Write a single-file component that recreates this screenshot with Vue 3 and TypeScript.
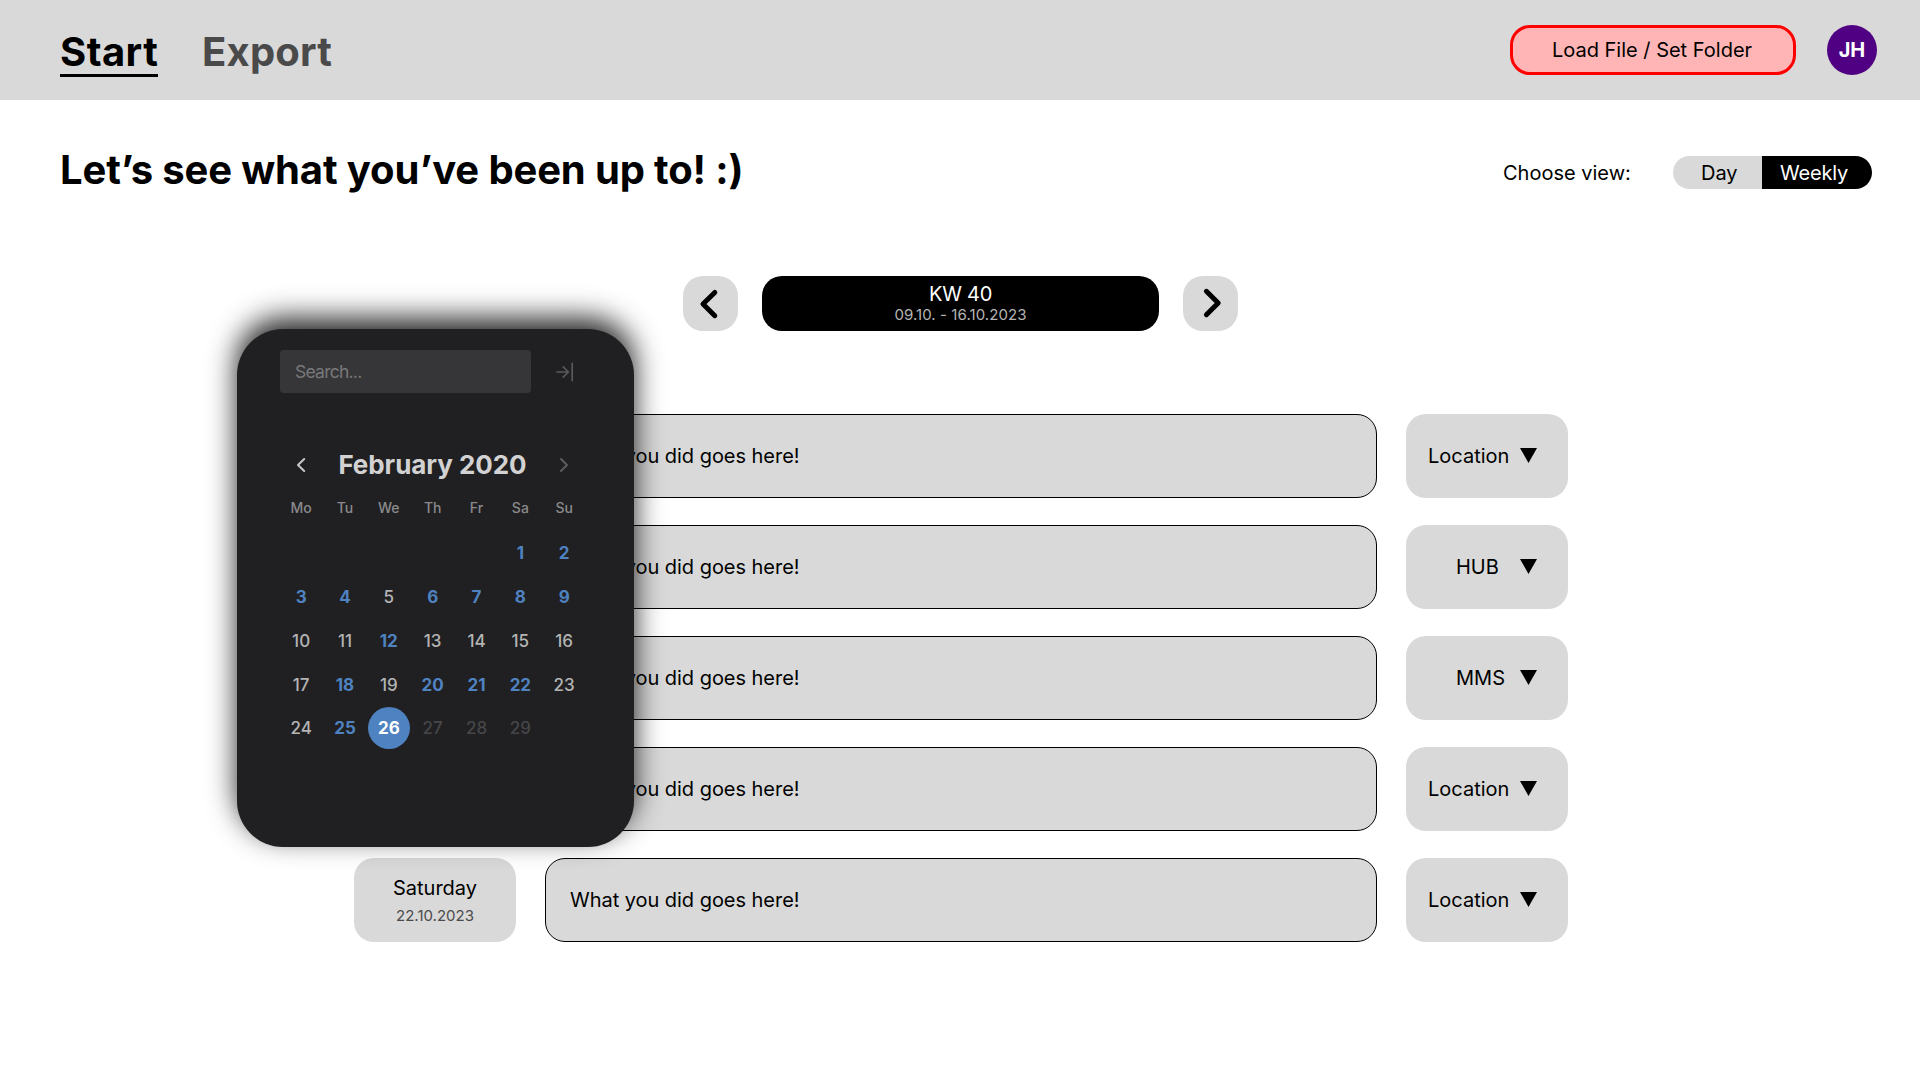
<script setup lang="ts">
interface Entry {
  day?: string
  date?: string
  text: string
  place: string
}

interface CalendarDay {
  label: string
  kind: 'blank' | 'plain' | 'noted' | 'today' | 'future'
}

const prompt = 'What you did goes here!'

const entries: Entry[] = [
  { text: prompt, place: 'Location' },
  { text: prompt, place: 'HUB' },
  { text: prompt, place: 'MMS' },
  { text: prompt, place: 'Location' },
  { day: 'Saturday', date: '22.10.2023', text: prompt, place: 'Location' },
]

const weekdays = ['Mo', 'Tu', 'We', 'Th', 'Fr', 'Sa', 'Su']

const noted = [1, 2, 3, 4, 6, 7, 8, 9, 12, 18, 20, 21, 22, 25]
const today = 26
const leadingBlanks = 5

const days: CalendarDay[] = Array.from({ length: 35 }, (_, i) => {
  const n = i - leadingBlanks + 1
  if (n < 1 || n > 29) return { label: '', kind: 'blank' }
  if (n === today) return { label: String(n), kind: 'today' }
  if (n > today) return { label: String(n), kind: 'future' }
  return { label: String(n), kind: noted.includes(n) ? 'noted' : 'plain' }
})
</script>

<template>
  <div class="page">
    <header class="topbar">
      <nav class="tabs">
        <a class="tab active">Start</a>
        <a class="tab">Export</a>
      </nav>
      <div class="account">
        <button class="load">Load File / Set Folder</button>
        <div class="avatar">JH</div>
      </div>
    </header>

    <section class="intro">
      <h1>Let’s see what you’ve been up to! :)</h1>
      <div class="view">
        <span class="view-label">Choose view:</span>
        <div class="toggle">
          <span class="option day-option">Day</span>
          <span class="option week-option">Weekly</span>
        </div>
      </div>
    </section>

    <section class="week">
      <button class="step">
        <svg width="55" height="55" viewBox="0 0 55 55"><path d="M31.8 16.5 L20 28 L31.8 39.7" /></svg>
      </button>
      <div class="range">
        <span class="kw">KW 40</span>
        <span class="dates">09.10. - 16.10.2023</span>
      </div>
      <button class="step">
        <svg width="55" height="55" viewBox="0 0 55 55"><path d="M23.4 15.3 L35.2 27 L23.4 38.7" /></svg>
      </button>
    </section>

    <main class="entries">
      <div v-for="(entry, i) in entries" :key="i" class="entry">
        <div class="day-card">
          <span v-if="entry.day" class="day-name">{{ entry.day }}</span>
          <span v-if="entry.date" class="day-date">{{ entry.date }}</span>
        </div>
        <div class="field">{{ entry.text }}</div>
        <div class="place">
          <span class="place-name" :class="{ short: entry.place.length < 4 }">{{ entry.place }}</span>
          <svg class="caret" width="17" height="15" viewBox="0 0 17 15"><path d="M0 0 H17 L8.5 15 Z" /></svg>
        </div>
      </div>
    </main>

    <aside class="calendar">
      <div class="search-row">
        <div class="search">Search...</div>
        <svg class="collapse" width="18" height="20" viewBox="0 0 18 20">
          <path d="M0.9 10 H12 M7.2 4.8 L12.4 10 L7.2 15.2 M16.2 1.4 V18.6" />
        </svg>
      </div>
      <div class="month">
        <svg width="10" height="16" viewBox="0 0 10 16"><path class="prev" d="M8.2 2 L2 8 L8.2 14" /></svg>
        <span class="month-name">February 2020</span>
        <svg width="10" height="16" viewBox="0 0 10 16"><path class="next" d="M2 2 L8 8 L2 14" /></svg>
      </div>
      <div class="weekdays">
        <span v-for="w in weekdays" :key="w">{{ w }}</span>
      </div>
      <div class="days">
        <div v-for="(d, i) in days" :key="i" class="cell" :class="d.kind">
          <span v-if="d.label">{{ d.label }}</span>
        </div>
      </div>
    </aside>
  </div>
</template>

<style>
body {
  margin: 0;
  background: #fff;
}
</style>

<style scoped>
.page {
  position: relative;
  width: 1920px;
  height: 1080px;
  overflow: hidden;
  background: #fff;
  color: #000;
  font-family: Inter, 'Liberation Sans', sans-serif;
  font-size: 20px;
  line-height: 24px;
}
.page * {
  box-sizing: border-box;
}
button {
  padding: 0;
  border: 0;
  font: inherit;
  color: inherit;
}
.topbar {
  display: flex;
  justify-content: space-between;
  height: 100px;
  padding: 25px 43px 0 60px;
  background: #d9d9d9;
}
.tabs {
  display: flex;
  align-items: flex-start;
  gap: 44px;
}
.tab {
  height: 52px;
  padding-top: 3px;
  font-size: 40px;
  line-height: 48px;
  font-weight: 700;
  letter-spacing: 0.2px;
  color: #4a4a4a;
  white-space: nowrap;
}
.tab.active {
  width: 98px;
  letter-spacing: 0.45px;
  color: #000;
  background: linear-gradient(#000, #000) 0 49px / 100% 3px no-repeat;
}
.account {
  display: flex;
  gap: 31px;
}
.load {
  width: 286px;
  height: 50px;
  padding-right: 2px;
  border: 3px solid #f00;
  border-radius: 20px;
  background: #ffb5b5;
}
.avatar {
  width: 50px;
  height: 50px;
  border-radius: 50%;
  background: #500082;
  color: #fff;
  font-weight: 700;
  line-height: 50px;
  text-align: center;
}
.intro {
  display: flex;
  justify-content: space-between;
  height: 176px;
  padding: 46px 48px 0 60px;
}
h1 {
  margin: 0;
  font-size: 40px;
  line-height: 48px;
  font-weight: 700;
  letter-spacing: -0.14px;
  white-space: nowrap;
}
.view {
  display: flex;
  align-items: flex-start;
  padding-top: 10px;
}
.view-label {
  width: 170px;
  line-height: 34px;
}
.toggle {
  display: flex;
  width: 199px;
  height: 33px;
  border-radius: 17px;
  overflow: hidden;
  line-height: 34px;
}
.day-option {
  width: 89px;
  padding-left: 28px;
  background: #d9d9d9;
}
.week-option {
  flex: 1;
  padding-left: 18px;
  background: #000;
  color: #fff;
  letter-spacing: -0.2px;
}
.week {
  display: flex;
  gap: 24px;
  padding-left: 683px;
}
.step {
  width: 55px;
  height: 55px;
  border-radius: 20px;
  background: #d9d9d9;
}
.step svg {
  display: block;
  fill: none;
  stroke: #000;
  stroke-width: 5;
  stroke-linecap: round;
  stroke-linejoin: round;
}
.range {
  display: flex;
  flex-direction: column;
  align-items: center;
  width: 397px;
  height: 55px;
  padding-top: 6px;
  border-radius: 20px;
  background: #000;
}
.kw {
  color: #fff;
  letter-spacing: -0.25px;
}
.dates {
  color: #b5b5b5;
  font-size: 15px;
  line-height: 18px;
  letter-spacing: 0.08px;
}
.entries {
  display: flex;
  flex-direction: column;
  gap: 27px;
  padding: 83px 0 0 354px;
}
.entry {
  display: flex;
  gap: 29px;
  height: 84px;
}
.day-card {
  display: flex;
  flex-direction: column;
  align-items: center;
  width: 162px;
  padding-top: 18px;
  border-radius: 20px;
  background: #d9d9d9;
}
.day-date {
  margin-top: 7px;
  color: #4a4a4a;
  font-size: 15px;
  line-height: 18px;
}
.field {
  width: 832px;
  padding-left: 24px;
  border: 1px solid #000;
  border-radius: 20px;
  background: #d9d9d9;
  line-height: 82px;
  letter-spacing: -0.04px;
}
.place {
  display: flex;
  align-items: center;
  justify-content: space-between;
  width: 162px;
  padding: 0 31.5px 0 22px;
  border-radius: 20px;
  background: #d9d9d9;
}
.place-name.short {
  padding-left: 28px;
}
.caret {
  display: block;
  margin-top: -1px;
}
.calendar {
  position: absolute;
  left: 237px;
  top: 329px;
  width: 397px;
  height: 518px;
  padding: 21px 48px 0 43px;
  border-radius: 46px;
  background: #202022;
  box-shadow: 0 -11px 29px rgba(0, 0, 0, 0.86);
  color: #b4b4b4;
}
.search-row {
  display: flex;
  align-items: center;
  justify-content: space-between;
  padding-right: 12px;
}
.search {
  width: 251px;
  height: 43px;
  padding-left: 15px;
  border-radius: 4px;
  background: #363638;
  color: #79797b;
  font-size: 17.5px;
  line-height: 44px;
  letter-spacing: -0.75px;
}
.collapse {
  fill: none;
  stroke: #59595b;
  stroke-width: 1.7;
  stroke-linecap: round;
  stroke-linejoin: round;
}
.month {
  display: flex;
  align-items: center;
  justify-content: space-between;
  height: 32px;
  margin-top: 56px;
  padding: 0 17px 0 16px;
}
.month svg {
  fill: none;
  stroke-width: 2;
  stroke-linecap: round;
  stroke-linejoin: round;
}
.prev {
  stroke: #c8c8c8;
}
.next {
  stroke: #5c5c5e;
}
.month-name {
  color: #d2d2d2;
  font-size: 26px;
  font-weight: 750;
  letter-spacing: -0.05px;
  white-space: nowrap;
}
.weekdays,
.days {
  display: grid;
  grid-template-columns: repeat(7, 43.85px);
  margin-left: -0.8px;
  text-align: center;
}
.weekdays {
  margin-top: 18px;
  color: #8a8a8c;
  font-size: 14px;
  font-weight: 500;
  line-height: 18px;
}
.days {
  grid-auto-rows: 43.8px;
  margin-top: 14.3px;
  font-size: 17px;
  font-weight: 550;
}
.cell {
  display: grid;
  place-items: center;
}
.noted {
  color: #4f82c0;
  font-weight: 700;
}
.future {
  color: #464648;
}
.today span {
  width: 42px;
  height: 42px;
  border-radius: 50%;
  background: #4f82c0;
  color: #fff;
  font-weight: 700;
  line-height: 42px;
}
</style>
